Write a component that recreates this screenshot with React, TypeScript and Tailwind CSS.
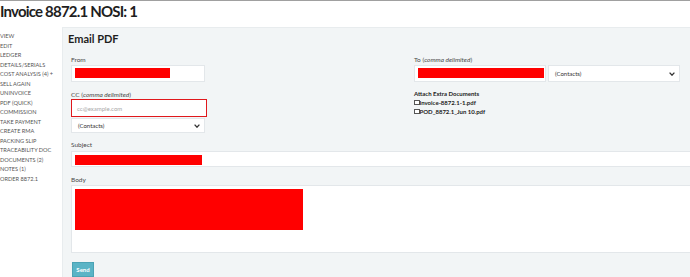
import React from "react";

const navItems = [
  "View",
  "Edit",
  "Ledger",
  "Details/Serials",
  "Cost Analysis (4) +",
  "Sell Again",
  "Uninvoice",
  "PDF (Quick)",
  "Commission",
  "Take Payment",
  "Create RMA",
  "Packing Slip",
  "Traceability Doc",
  "Documents (2)",
  "Notes (1)",
  "Order 8872.1",
];

function Chevron() {
  return (
    <svg width="6" height="4" viewBox="0 0 6 4" className="text-[#333]">
      <path d="M0.6 0.6 L3 3.2 L5.4 0.6" fill="none" stroke="currentColor" strokeWidth="1.3" />
    </svg>
  );
}

function ContactsSelect({ className = "" }: { className?: string }) {
  return (
    <div
      className={`flex items-center justify-between bg-white border border-[#e3e7ea] pl-[6px] pr-[4px] text-[6px] text-[#333] ${className}`}
    >
      <span>(Contacts)</span>
      <Chevron />
    </div>
  );
}

function Label({ children }: { children: React.ReactNode }) {
  return <div className="text-[6.5px] leading-[8px] text-[#4a4a4a]">{children}</div>;
}

function Redacted({ className = "" }: { className?: string }) {
  return <div className={`bg-[#ff0000] ${className}`} />;
}

export default function App() {
  return (
    <div className="w-[690px] h-[277px] overflow-hidden bg-white border-t border-[#a0a0a0] font-['Lato',sans-serif]">
      <h1 className="text-[15px] tracking-[-0.8px] font-bold leading-[16px] pt-[2px] text-[#1e1e1e]">
        Invoice 8872.1 NOSI: 1
      </h1>
      <div className="flex mt-[8px]">
        <ul className="w-[62px] shrink-0 pt-[4px] text-[5.6px] leading-[9.5px] uppercase text-[#555]">
          {navItems.map((item) => (
            <li key={item}>{item}</li>
          ))}
        </ul>
        <div className="w-[640px] shrink-0 bg-[#f2f5f6] border-l border-t border-[#e8ecee] pl-[5px] pt-[5px] pb-[10px]">
          <h2 className="text-[11px] font-bold leading-[12px] text-[#1e1e1e]">Email PDF</h2>
          <div className="pl-[3px] mt-[11px]">
            <div className="flex">
              <div className="w-[343px] shrink-0">
                <Label>From</Label>
                <div className="w-[134px] h-[17px] mt-[1px] bg-white border border-[#e3e7ea] pl-[3px] pt-[2px]">
                  <Redacted className="w-[95px] h-[10px]" />
                </div>
                <div className="mt-[9px]">
                  <Label>
                    CC (<span className="italic">comma delimited</span>)
                  </Label>
                </div>
                <div className="w-[136px] h-[18px] bg-white border-[1.5px] border-[#e0181c] flex items-center pl-[5px] text-[6px] text-[#a8a8a8]">
                  cc@example.com
                </div>
                <ContactsSelect className="w-[134px] h-[15px] mt-[1px]" />
              </div>
              <div>
                <Label>
                  To (<span className="italic">comma delimited</span>)
                </Label>
                <div className="flex gap-[2px] mt-[1px]">
                  <div className="w-[132px] h-[17px] bg-white border border-[#e3e7ea] pl-[3px] pt-[2px]">
                    <Redacted className="w-[126px] h-[10px]" />
                  </div>
                  <ContactsSelect className="w-[132px] h-[17px]" />
                </div>
                <div className="mt-[7px] text-[6px] leading-[9px] font-bold text-[#222]">
                  <div>Attach Extra Documents</div>
                  <label className="flex items-center">
                    <span className="w-[5.5px] h-[5.5px] border border-[#555] bg-white" />
                    Invoice-8872.1-1.pdf
                  </label>
                  <label className="flex items-center">
                    <span className="w-[5.5px] h-[5.5px] border border-[#555] bg-white" />
                    POD_8872.1_Jun 10.pdf
                  </label>
                </div>
              </div>
            </div>
            <div className="mt-[8px]">
              <Label>Subject</Label>
            </div>
            <div className="h-[16px] mt-[2px] bg-white border-y border-l border-[#e3e7ea] pl-[3px] pt-[3px]">
              <Redacted className="w-[127px] h-[10px]" />
            </div>
            <div className="mt-[9px]">
              <Label>Body</Label>
            </div>
            <div className="h-[68px] mt-[1px] bg-white border-y border-l border-[#e3e7ea] pl-[3px] pt-[3px]">
              <Redacted className="w-[228px] h-[41px]" />
            </div>
            <button className="mt-[9px] ml-[1px] w-[22px] h-[15px] bg-[#5ab4c6] text-white text-[6px] font-bold border border-[#4ba3b5] flex items-center justify-center">
              Send
            </button>
          </div>
        </div>
      </div>
    </div>
  );
}
